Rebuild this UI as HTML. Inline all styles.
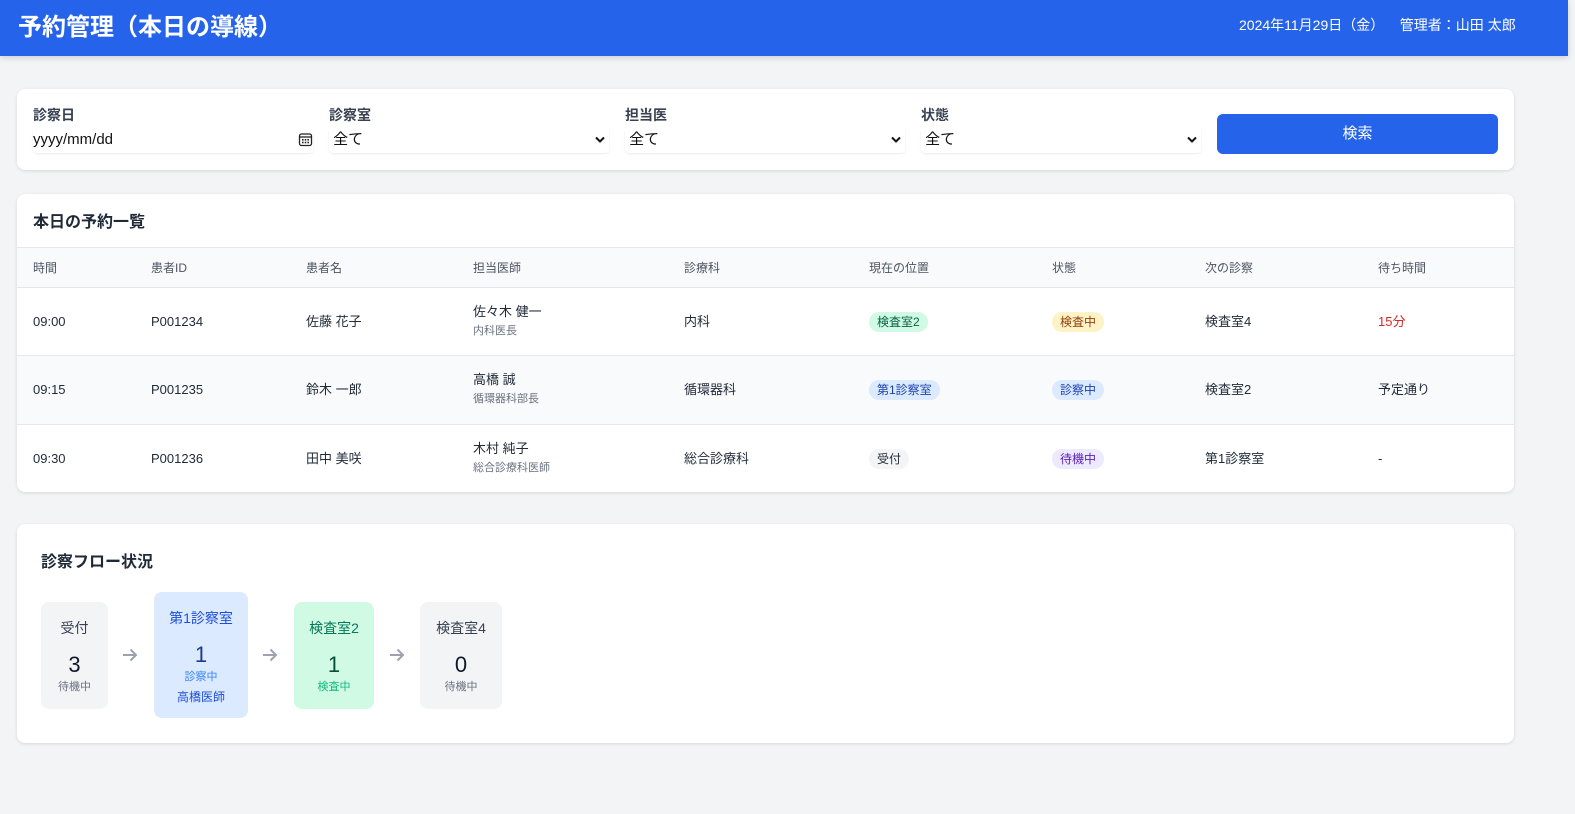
<!DOCTYPE html><html><head><meta charset="utf-8"><style>
*{box-sizing:border-box;margin:0;padding:0}
html,body{overflow:hidden}
body{width:1575px;height:814px;background:#f3f4f6;font-family:"Liberation Sans","Noto Sans CJK JP",sans-serif;color:#1f2937;position:relative}
.hdr{position:absolute;left:0;top:0;width:1568px;height:56px;background:#2563eb;box-shadow:0 2px 6px rgba(0,0,0,.15);color:#fff}
.hdr h1{position:absolute;left:18px;top:12px;font-size:24px;font-weight:bold;line-height:32px}
.hdr .r{position:absolute;left:1239px;top:15px;font-size:14px;line-height:20px}
.card{position:absolute;left:17px;width:1497px;background:#fff;border-radius:8px;box-shadow:0 1px 3px rgba(0,0,0,.12)}
.f{position:absolute;top:16px}
.f label{display:block;font-size:14px;font-weight:bold;color:#374151;height:22px;line-height:20px}
.f .in{height:26px;border-radius:4px;box-shadow:0 1px 2px rgba(0,0,0,.08);font-size:15px;color:#111;position:relative;line-height:26px}
.btn{position:absolute;left:1200px;top:25px;width:281px;height:40px;background:#2563eb;border-radius:6px;color:#fff;font-size:15px;text-align:center;line-height:40px}
.chev{position:absolute;right:4px;top:9px}
.t{position:absolute;left:0;width:1497px;font-size:13px}
.row>div{position:absolute;line-height:18px}
.pill{display:inline-block;padding:1px 8px;border-radius:10px;font-size:12px;line-height:18px}
.box{position:absolute;border-radius:8px;text-align:center}
.box .a{font-size:14px;line-height:20px}.box .n{font-size:22px;font-weight:500;color:#111827;line-height:28px}.box .s{font-size:11px;line-height:16px}
.arr{position:absolute;top:648px}
</style></head><body>
<div class="hdr"><h1>予約管理（本日の導線）</h1><div class="r">2024年11月29日（金）&nbsp;&nbsp;&nbsp;&nbsp;管理者：山田 太郎</div></div>

<div class="card" style="top:89px;height:81px">
 <div class="f" style="left:16px;width:280px"><label>診察日</label><div class="in">yyyy/mm/dd<svg style="position:absolute;right:0;top:5px" width="15" height="15" viewBox="0 0 15 15"><rect x="1.5" y="2" width="12" height="11.5" rx="2" fill="none" stroke="#222" stroke-width="1.3"/><line x1="1.5" y1="5" x2="13.5" y2="5" stroke="#222" stroke-width="1.3"/><g fill="#222"><rect x="4" y="7" width="1.6" height="1.6"/><rect x="6.7" y="7" width="1.6" height="1.6"/><rect x="9.4" y="7" width="1.6" height="1.6"/><rect x="4" y="9.7" width="1.6" height="1.6"/><rect x="6.7" y="9.7" width="1.6" height="1.6"/><rect x="9.4" y="9.7" width="1.6" height="1.6"/></g></svg></div></div>
 <div class="f" style="left:312px;width:280px"><label>診察室</label><div class="in">&nbsp;全て<svg class="chev" width="10" height="7" viewBox="0 0 10 7"><path d="M1 1.5L5 5.5L9 1.5" fill="none" stroke="#111" stroke-width="2"/></svg></div></div>
 <div class="f" style="left:608px;width:280px"><label>担当医</label><div class="in">&nbsp;全て<svg class="chev" width="10" height="7" viewBox="0 0 10 7"><path d="M1 1.5L5 5.5L9 1.5" fill="none" stroke="#111" stroke-width="2"/></svg></div></div>
 <div class="f" style="left:904px;width:280px"><label>状態</label><div class="in">&nbsp;全て<svg class="chev" width="10" height="7" viewBox="0 0 10 7"><path d="M1 1.5L5 5.5L9 1.5" fill="none" stroke="#111" stroke-width="2"/></svg></div></div>
 <div class="btn">検索</div>
</div>

<div class="card" style="top:194px;height:298px;overflow:hidden">
 <div style="position:absolute;left:16px;top:18px;font-size:16px;font-weight:bold;line-height:22px">本日の予約一覧</div>
 <div class="t row" style="top:53px;height:41px;background:#f9fafb;border-top:1px solid #e5e7eb;border-bottom:1px solid #e5e7eb;color:#4b5563;font-size:12px">
  <div style="left:16px;top:11px">時間</div><div style="left:134px;top:11px">患者ID</div><div style="left:289px;top:11px">患者名</div><div style="left:456px;top:11px">担当医師</div><div style="left:667px;top:11px">診療科</div><div style="left:852px;top:11px">現在の位置</div><div style="left:1035px;top:11px">状態</div><div style="left:1188px;top:11px">次の診察</div><div style="left:1361px;top:11px">待ち時間</div>
 </div>
 <div class="t row" style="top:94px;height:68px;border-bottom:1px solid #e5e7eb">
  <div style="left:16px;top:25px">09:00</div><div style="left:134px;top:25px">P001234</div><div style="left:289px;top:25px">佐藤 花子</div><div style="left:456px;top:15px">佐々木 健一<br><span style="font-size:11px;color:#6b7280">内科医長</span></div><div style="left:667px;top:25px">内科</div><div style="left:852px;top:24px"><span class="pill" style="background:#d1fae5;color:#065f46">検査室2</span></div><div style="left:1035px;top:24px"><span class="pill" style="background:#fef3c7;color:#92400e">検査中</span></div><div style="left:1188px;top:25px">検査室4</div><div style="left:1361px;top:25px;color:#dc2626">15分</div>
 </div>
 <div class="t row" style="top:162px;height:69px;background:#f9fafb;border-bottom:1px solid #e5e7eb">
  <div style="left:16px;top:25px">09:15</div><div style="left:134px;top:25px">P001235</div><div style="left:289px;top:25px">鈴木 一郎</div><div style="left:456px;top:15px">高橋 誠<br><span style="font-size:11px;color:#6b7280">循環器科部長</span></div><div style="left:667px;top:25px">循環器科</div><div style="left:852px;top:24px"><span class="pill" style="background:#dbeafe;color:#1e40af">第1診察室</span></div><div style="left:1035px;top:24px"><span class="pill" style="background:#dbeafe;color:#1e40af">診察中</span></div><div style="left:1188px;top:25px">検査室2</div><div style="left:1361px;top:25px">予定通り</div>
 </div>
 <div class="t row" style="top:231px;height:68px">
  <div style="left:16px;top:25px">09:30</div><div style="left:134px;top:25px">P001236</div><div style="left:289px;top:25px">田中 美咲</div><div style="left:456px;top:15px">木村 純子<br><span style="font-size:11px;color:#6b7280">総合診療科医師</span></div><div style="left:667px;top:25px">総合診療科</div><div style="left:852px;top:24px"><span class="pill" style="background:#f3f4f6;color:#1f2937">受付</span></div><div style="left:1035px;top:24px"><span class="pill" style="background:#ede9fe;color:#5b21b6">待機中</span></div><div style="left:1188px;top:25px">第1診察室</div><div style="left:1361px;top:25px">-</div>
 </div>
</div>

<div class="card" style="top:524px;height:219px"><div style="position:absolute;left:24px;top:28px;font-size:16px;font-weight:bold;line-height:22px">診察フロー状況</div></div>
<div class="box" style="left:41px;top:602px;width:67px;height:107px;background:#f3f4f6"><div class="a" style="margin-top:16px;color:#374151">受付</div><div class="n" style="margin-top:13px">3</div><div class="s" style="color:#6b7280">待機中</div></div>
<svg class="arr" style="left:122px" width="16" height="14" viewBox="0 0 16 14"><path d="M1 7H14M8.5 1.5L14 7L8.5 12.5" fill="none" stroke="#9ca3af" stroke-width="2"/></svg>
<div class="box" style="left:154px;top:592px;width:94px;height:126px;background:#dbeafe"><div class="a" style="margin-top:16px;color:#1d4ed8">第1診察室</div><div class="n" style="margin-top:13px;color:#1e3a8a">1</div><div class="s" style="color:#3b82f6">診察中</div><div class="s" style="color:#1d4ed8;margin-top:4px;font-size:12px">高橋医師</div></div>
<svg class="arr" style="left:262px" width="16" height="14" viewBox="0 0 16 14"><path d="M1 7H14M8.5 1.5L14 7L8.5 12.5" fill="none" stroke="#9ca3af" stroke-width="2"/></svg>
<div class="box" style="left:294px;top:602px;width:80px;height:107px;background:#d1fae5"><div class="a" style="margin-top:16px;color:#047857">検査室2</div><div class="n" style="margin-top:13px;color:#064e3b">1</div><div class="s" style="color:#10b981">検査中</div></div>
<svg class="arr" style="left:389px" width="16" height="14" viewBox="0 0 16 14"><path d="M1 7H14M8.5 1.5L14 7L8.5 12.5" fill="none" stroke="#9ca3af" stroke-width="2"/></svg>
<div class="box" style="left:420px;top:602px;width:82px;height:107px;background:#f3f4f6"><div class="a" style="margin-top:16px;color:#374151">検査室4</div><div class="n" style="margin-top:13px">0</div><div class="s" style="color:#6b7280">待機中</div></div>
</body></html>
